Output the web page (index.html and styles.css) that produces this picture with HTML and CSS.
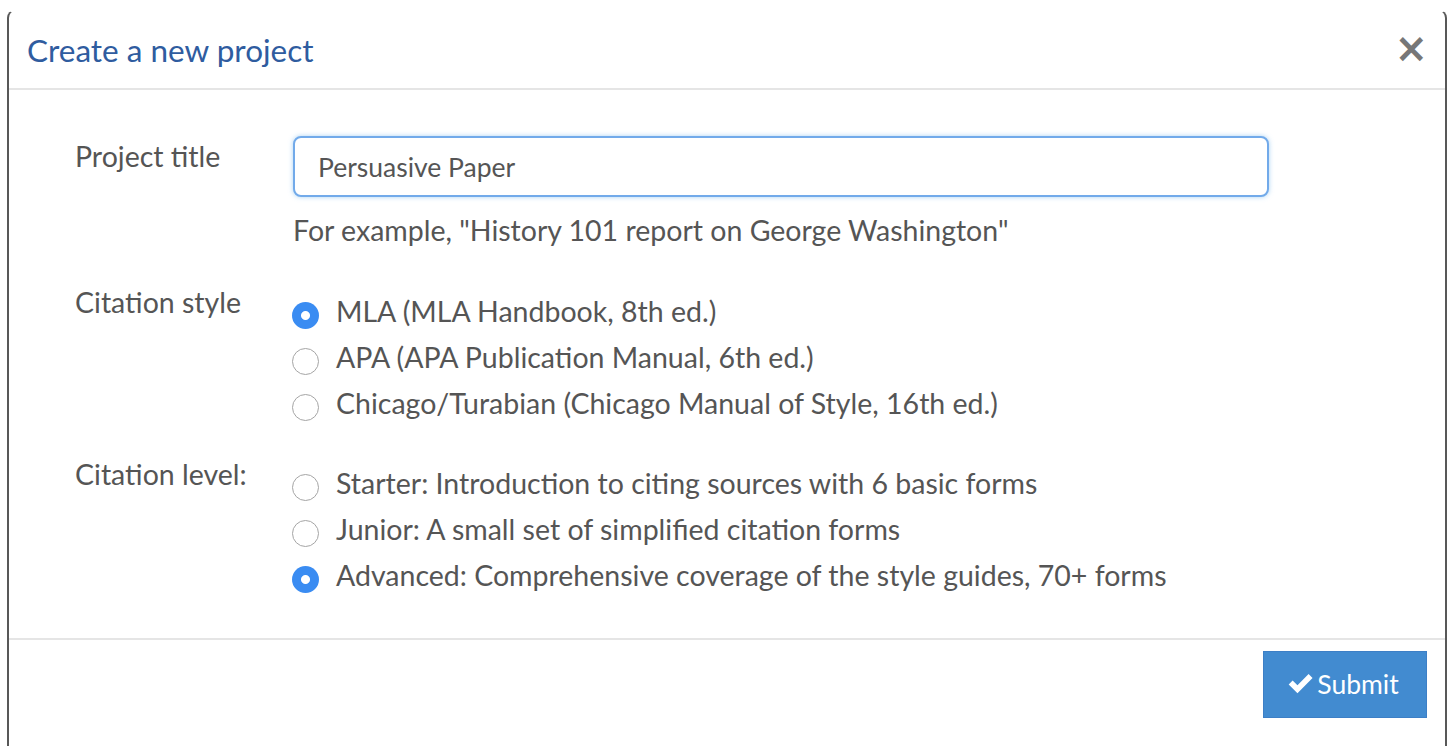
FILE: index.html
```html
<!DOCTYPE html>
<html lang="en">
<head>
<meta charset="utf-8">
<title>Create a new project</title>
<link rel="stylesheet" href="styles.css">
</head>
<body>
<div class="modal">
  <div class="modal-header">
    <h4 class="modal-title">Create a new project</h4>
    <button class="close" type="button" aria-label="Close">&times;</button>
  </div>
  <form class="modal-body">
    <div class="row row-first">
      <label class="row-label" for="title">Project title</label>
      <div class="row-control">
        <input id="title" class="text-input" type="text" value="Persuasive Paper">
        <p class="help">For example, "History 101 report on George Washington"</p>
      </div>
    </div>
    <div class="row">
      <span class="row-label">Citation style</span>
      <div class="row-control options">
        <label class="option"><span class="radio checked"></span>MLA (MLA Handbook, 8th ed.)</label>
        <label class="option"><span class="radio"></span>APA (APA Publication Manual, 6th ed.)</label>
        <label class="option"><span class="radio"></span>Chicago/Turabian (Chicago Manual of Style, 16th ed.)</label>
      </div>
    </div>
    <div class="row">
      <span class="row-label">Citation level:</span>
      <div class="row-control options">
        <label class="option"><span class="radio"></span>Starter: Introduction to citing sources with 6 basic forms</label>
        <label class="option"><span class="radio"></span>Junior: A small set of simplified citation forms</label>
        <label class="option"><span class="radio checked"></span>Advanced: Comprehensive coverage of the style guides, 70+ forms</label>
      </div>
    </div>
  </form>
  <div class="modal-footer">
    <button class="btn-primary" type="button">
      <svg class="check" viewBox="0 0 24 24" width="24" height="24" aria-hidden="true"><path d="M1.5 12.8 L5 9.3 L9.3 13.6 L19.2 3.6 L22.7 7.1 L9.3 20.6 Z" fill="#fff"/></svg>Submit
    </button>
  </div>
</div>
</body>
</html>
```

FILE: styles.css
```css
* { box-sizing: border-box; }

html, body {
  margin: 0;
  padding: 0;
  background: #fff;
  font-family: Lato, "Open Sans", Arial, sans-serif;
  overflow: hidden;
}

.modal {
  margin: 10px 0 0 7px;
  width: 1440px;
  height: 760px;
  border-left: 2px solid #585858;
  border-right: 2px solid #585858;
  border-top: 1px solid #fff;
  border-top-left-radius: 8px;
  border-top-right-radius: 8px;
  background: #fff;
}

.modal-header {
  display: flex;
  align-items: center;
  justify-content: space-between;
  height: 79px;
  padding: 0 17px 0 18px;
  border-bottom: 2px solid #e5e5e5;
}

.modal-title {
  margin: 0;
  font-size: 31.5px;
  font-weight: 400;
  color: #2f5c9f;
}

.close {
  border: 0;
  background: none;
  padding: 0;
  font-family: "DejaVu Sans", Arial, sans-serif;
  font-size: 40px;
  font-weight: 700;
  line-height: 1;
  color: #777;
  margin-top: -3px;
}

.modal-body {
  margin: 0;
  padding: 46px 0 40px 66px;
}

.row {
  display: grid;
  grid-template-columns: 218px 976px;
  align-items: start;
  margin-bottom: 28px;
}

.row-first { margin-bottom: 35px; }

.row:last-child { margin-bottom: 0; }

.row-label {
  font-size: 28.5px;
  color: #555;
  padding-top: 3px;
  line-height: 34px;
}

.text-input {
  display: block;
  width: 976px;
  height: 61px;
  padding: 0 23px;
  font-family: Lato, "Open Sans", Arial, sans-serif;
  font-size: 26.5px;
  color: #555;
  border: 2px solid #72aaea;
  border-radius: 8px;
  box-shadow: 0 0 5px rgba(102, 175, 233, 0.55);
  outline: none;
}

.help {
  margin: 16px 0 0;
  font-size: 28.5px;
  line-height: 34px;
  color: #555;
}

.options {
  display: flex;
  flex-direction: column;
  padding-top: 6px;
}

.option {
  display: flex;
  align-items: center;
  height: 46px;
  font-size: 28.5px;
  color: #555;
}

.radio {
  flex: none;
  width: 27px;
  height: 27px;
  margin: 9px 17px 0 -1px;
  border-radius: 50%;
  border: 1.5px solid #a5a5a5;
  background: #fff;
}

.radio.checked {
  border: 0;
  background: radial-gradient(circle, #fff 0 4px, #3a8cf2 5px);
}

.modal-footer {
  display: flex;
  justify-content: flex-end;
  border-top: 2px solid #e5e5e5;
  padding: 11px 18px 0 0;
}

.btn-primary {
  display: flex;
  align-items: center;
  gap: 3px;
  width: 164px;
  height: 67px;
  justify-content: center;
  border: 1px solid #3d7fc6;
  background: #428bd0;
  color: #fff;
  font-family: Lato, "Open Sans", Arial, sans-serif;
  font-size: 26.5px;
  padding: 0 4px 2px 0;
}

.check {
  width: 27px;
  height: 27px;
}
```
